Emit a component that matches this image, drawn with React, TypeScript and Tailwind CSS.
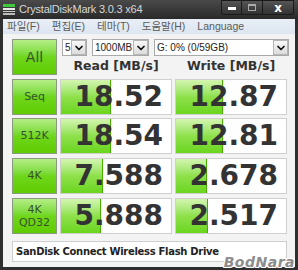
import { ChevronDown } from 'lucide-react';

const menus = ['파일(F)', '편집(E)', '테마(T)', '도움말(H)', 'Language'];

const rows = [
    { label: ['Seq'], read: '18.52', write: '12.87', rw: 50, ww: 47, mt: 'mt-[3px]' },
    { label: ['512K'], read: '18.54', write: '12.81', rw: 50, ww: 47, mt: 'mt-[3px]' },
    { label: ['4K'], read: '7.588', write: '2.678', rw: 42, ww: 31, mt: 'mt-[4px]' },
    { label: ['4K', 'QD32'], read: '5.888', write: '2.517', rw: 40, ww: 32, mt: 'mt-[4px]' },
];

function GreenButton({ lines, big }: { lines: string[]; big?: boolean }) {
    return (
        <div className="w-[45px] h-[36px] flex flex-col items-center justify-center border border-[#8a9a80] bg-gradient-to-b from-[#b4ee84] via-[#6fd61a] to-[#5fcc00] leading-[13px] text-[#35522a]">
            {lines.map((l) => (
                <span key={l} className={big ? 'text-[14px]' : 'text-[11px]'}>
                    {l}
                </span>
            ))}
        </div>
    );
}

function Cell({ value, bar }: { value: string; bar: number }) {
    return (
        <div className="relative w-[112px] h-[36px] bg-white border border-[#cfcfcf]">
            <div
                className="absolute left-0 top-0 bottom-0 bg-gradient-to-b from-[#d4f5b0] via-[#8ee04a] to-[#6ad61a] border-r border-[#46b000]"
                style={{ width: bar }}
            />
            <div className="relative h-full flex items-center justify-end pr-[8px] text-[28px] font-bold text-[#333]">
                {value}
            </div>
        </div>
    );
}

function Combo({ text, w }: { text: string; w: string }) {
    return (
        <div
            className={`${w} h-[17px] flex items-center bg-white border border-[#a9a9a9] text-[10px] text-[#222]`}
            style={{ fontFamily: '"Liberation Sans", sans-serif' }}
        >
            <span className="flex-1 pl-[2px] leading-none whitespace-nowrap">{text}</span>
            <div className="w-[15px] h-[15px] shrink-0 flex items-center justify-center border border-[#b5b5b5] bg-gradient-to-b from-[#f8f8f8] to-[#dcdcdc]">
                <ChevronDown className="w-[12px] h-[12px] text-[#111]" strokeWidth={3.5} />
            </div>
        </div>
    );
}

export default function App() {
    return (
        <div
            className="relative w-[298px] h-[270px] bg-[#2e2e2e] flex flex-col overflow-hidden"
            style={{ fontFamily: '"DejaVu Sans", "Noto Sans CJK KR", sans-serif' }}
        >
            <div className="h-[19px] flex items-center bg-gradient-to-b from-[#4a4a4a] to-[#2a2a2a]">
                <div className="ml-[3px] w-[12px] h-[11px] flex flex-col gap-[1px]">
                    <div className="h-[4px] bg-[#3fc83f]" />
                    <div className="h-[2px] bg-[#e8e8e8]" />
                    <div className="h-[2px] bg-[#d0d0d0]" />
                    <div className="h-[2px] bg-[#bbbbbb]" />
                </div>
                <span
                    className="ml-[4px] text-[11px] text-[#d8d8d8] tracking-[-0.2px]"
                    style={{ fontFamily: '"Liberation Sans", sans-serif' }}
                >
                    CrystalDiskMark 3.0.3 x64
                </span>
                <div className="ml-auto mr-[4px] self-start flex">
                    <div className="w-[21px] h-[15px] flex items-end justify-center pb-[4px] border border-[#1a1a1a] rounded-bl-[3px] bg-gradient-to-b from-[#555] to-[#333]">
                        <div className="w-[8px] h-[3px] bg-white" />
                    </div>
                    <div className="w-[21px] h-[15px] flex items-center justify-center border-y border-r border-[#1a1a1a] bg-gradient-to-b from-[#555] to-[#333]">
                        <div className="w-[8px] h-[7px] border border-[#aaa] border-t-2" />
                    </div>
                    <div className="w-[31px] h-[15px] flex items-center justify-center border-y border-r border-[#1a1a1a] rounded-br-[3px] bg-gradient-to-b from-[#555] to-[#333] text-white text-[12px] font-bold leading-none">
                        x
                    </div>
                </div>
            </div>

            <div className="flex-1 mx-[3px] mb-[3px] bg-[#f3f3f3] flex flex-col">
                <div
                    className="h-[15px] flex items-center gap-[12px] pl-[4px] bg-gradient-to-b from-[#e9eef6] to-[#dde6f1] text-[10.5px] text-[#5a5a5a]"
                    style={{ fontFamily: '"Liberation Sans", "Noto Sans CJK KR", sans-serif' }}
                >
                    {menus.map((m) => (
                        <span key={m}>{m}</span>
                    ))}
                </div>

                <div className="pl-[9px] pt-[5px] flex flex-col">
                    <div className="flex gap-[3px]">
                        <GreenButton lines={['All']} big />
                        <div className="flex flex-col">
                            <div className="flex gap-[5px] pl-[2px]">
                                <Combo text="5" w="w-[25px]" />
                                <Combo text="1000MB" w="w-[57px]" />
                                <Combo text="G: 0% (0/59GB)" w="w-[135px]" />
                            </div>
                            <div className="flex gap-[3px] mt-[1px] text-[12.5px] font-bold text-[#333]">
                                <div className="w-[112px] text-center">Read [MB/s]</div>
                                <div className="w-[112px] text-center">Write [MB/s]</div>
                            </div>
                        </div>
                    </div>

                    {rows.map((r) => (
                        <div key={r.read} className={`flex gap-[3px] ${r.mt}`}>
                            <GreenButton lines={r.label} />
                            <Cell value={r.read} bar={r.rw} />
                            <Cell value={r.write} bar={r.ww} />
                        </div>
                    ))}

                    <div className="mt-[7px] w-[275px] h-[21px] flex items-center pl-[3px] bg-white border border-[#cfcfcf] text-[10px] font-bold text-[#222] tracking-[-0.3px]">
                        SanDisk Connect Wireless Flash Drive
                    </div>
                </div>
            </div>

            <div
                className="absolute right-[3px] bottom-[1px] text-[14px] font-bold italic text-[#8c8c8c] leading-none tracking-[0.5px]"
                style={{ textShadow: '1px 1px 0 #fff, -1px -1px 0 #fff, 1px -1px 0 #fff, -1px 1px 0 #fff' }}
            >
                BodNara
            </div>
        </div>
    );
}
